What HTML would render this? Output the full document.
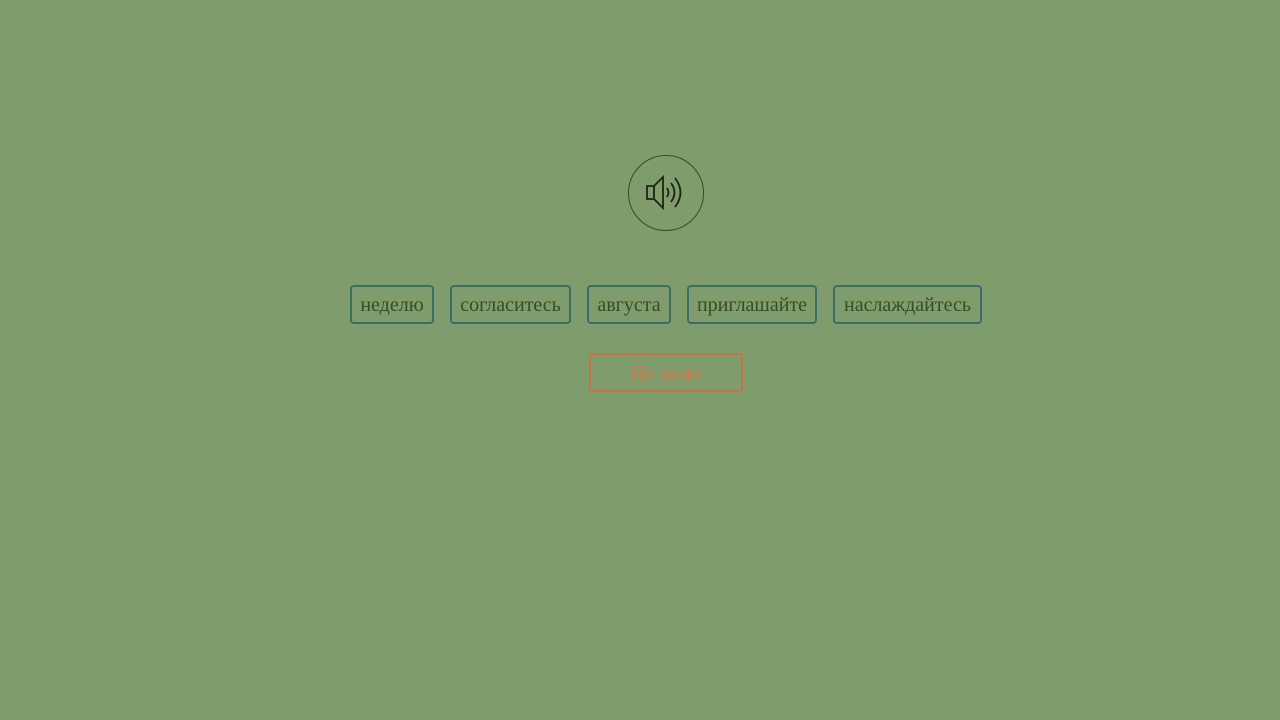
<!DOCTYPE html>
<html><head><meta charset="utf-8"><style>
body{margin:0;width:1280px;height:720px;background:#7f9c6c;font-family:"Liberation Serif",serif;position:relative;overflow:hidden}
.c{position:absolute;left:628px;top:155px;width:74px;height:74px;border:1.5px solid #3d4a25;border-radius:50%}
.w{position:absolute;top:285px;height:39px;border:2px solid #3f6a6a;border-radius:4px;box-sizing:border-box;font-size:20px;color:#3a4a28;line-height:37px;text-align:center}
.n{position:absolute;left:589px;top:353px;width:154px;height:39px;border:2px solid #c8704a;border-radius:3px;box-sizing:border-box;color:#d0764a;font-size:20px;line-height:37px;text-align:center}
</style></head><body>
<div class="c"><svg width="74" height="74" viewBox="0 0 74 74" style="position:absolute;left:0;top:0" fill="none" stroke="#1e2412" stroke-width="1.8"><path d="M18 30h7v13h-7z M25 30l9-9v31l-9-9"/><path d="M38 32q3 4.5 0 9"/><path d="M42 27q7 9.5 0 19"/><path d="M46 22q11 14.5 0 29"/></svg></div>
<div class="w" style="left:350px;width:84px">неделю</div>
<div class="w" style="left:450px;width:121px">согласитесь</div>
<div class="w" style="left:587px;width:84px">августа</div>
<div class="w" style="left:687px;width:130px">приглашайте</div>
<div class="w" style="left:833px;width:149px">наслаждайтесь</div>
<div class="n">Не знаю</div>
</body></html>
